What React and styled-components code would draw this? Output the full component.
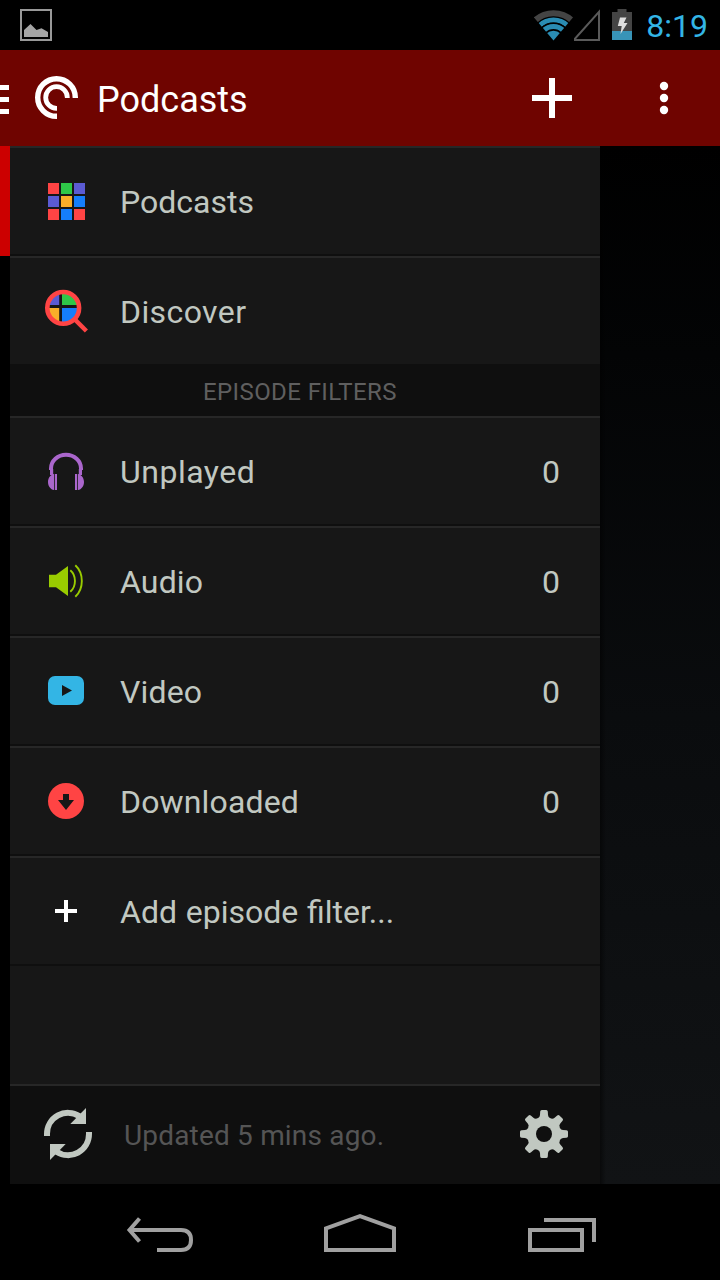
import React from 'react';
import styled, { createGlobalStyle } from 'styled-components';

const GlobalStyle = createGlobalStyle`
  * { box-sizing: border-box; }
  html, body { margin: 0; padding: 0; background: #000; }
  body { font-family: Roboto, "Liberation Sans", sans-serif; overflow: hidden; }
  svg { display: block; flex: none; }
`;

const Screen = styled.div`
  display: flex;
  flex-direction: column;
  width: 720px;
  height: 1280px;
  background: #000;
`;

const StatusBar = styled.div`
  display: flex;
  align-items: center;
  height: 50px;
  padding: 0 12px 0 20px;
`;

const StatusTray = styled.div`
  display: flex;
  align-items: center;
  margin-left: auto;
`;

const Clock = styled.span`
  margin-left: 13px;
  padding-top: 2px;
  font-size: 32px;
  line-height: 38px;
  color: #33b5e5;
`;

const ActionBar = styled.header`
  display: flex;
  align-items: center;
  height: 96px;
  background: #6f0400;
`;

const Title = styled.h1`
  flex: 1;
  margin: 0;
  padding: 4px 0 0 18px;
  font-size: 36px;
  font-weight: 400;
  line-height: 42px;
  color: #fff;
`;

const Main = styled.main`
  display: grid;
  grid-template-columns: 10px 590px 1fr;
  height: 1038px;
`;

const Edge = styled.div`
  background: #000;
`;

const ActiveMark = styled.div`
  height: 110px;
  background: #cc0000;
`;

const Drawer = styled.nav`
  display: flex;
  flex-direction: column;
  background: #171717;
`;

const Backdrop = styled.div`
  background:
    linear-gradient(90deg, rgba(0, 0, 0, 0.5), rgba(0, 0, 0, 0) 6px),
    linear-gradient(180deg, #000 0%, #030405 20%, #0a0c0e 55%, #111315 100%);
`;

const Row = styled.div`
  display: flex;
  align-items: center;
  height: 110px;
  padding: 0 40px 0 32px;
  border-top: 2px solid #272727;
  border-bottom: 2px solid #0f0f0f;
  color: #c1c8c1;
  font-size: 32px;
  line-height: 38px;
`;

const RowLabel = styled.span`
  flex: 1;
  padding: 2px 0 0 30px;
  letter-spacing: ${(p) => (p.$tracking ? `${p.$tracking}px` : 'normal')};
  word-spacing: 0.8px;
`;

const Count = styled.span`
  padding-top: 2px;
`;

const SectionHeader = styled.div`
  display: flex;
  align-items: center;
  justify-content: center;
  height: 50px;
  padding: 2px 10px 0 0;
  background: #0f0f0f;
  color: #5f5f5f;
  font-size: 24px;
  line-height: 28px;
  letter-spacing: 0.4px;
`;

const Footer = styled.div`
  display: flex;
  align-items: center;
  height: 100px;
  margin-top: auto;
  padding: 0 30px 2px 32px;
  border-top: 2px solid #272727;
  background: #0f0f0f;
`;

const UpdatedText = styled.span`
  flex: 1;
  padding: 4px 0 0 30px;
  color: #555;
  font-size: 28px;
  line-height: 34px;
  letter-spacing: 0.18px;
`;

const SystemNav = styled.div`
  display: flex;
  gap: 128px;
  height: 96px;
  padding: 26px 0 0 124px;
`;

const RED = '#ff4444';
const GREEN = '#2ec748';
const VIOLET = '#5b5bd3';
const AMBER = '#f9ae29';
const BLUE = '#157efb';

const TILE_ROWS = [
  [RED, GREEN, VIOLET],
  [VIOLET, AMBER, BLUE],
  [RED, BLUE, RED],
];

const RowIcon = ({ children }) => (
  <svg width="48" height="48" viewBox="0 0 48 48" fill="none">{children}</svg>
);

const GridIcon = () => (
  <RowIcon>
    {TILE_ROWS.map((row, y) =>
      row.map((color, x) => (
        <rect key={`${x}-${y}`} x={6 + x * 13} y={6 + y * 13} width="11" height="11" fill={color} />
      ))
    )}
  </RowIcon>
);

const DiscoverIcon = () => (
  <RowIcon>
    <clipPath id="lens"><circle cx="21.2" cy="20.9" r="15" /></clipPath>
    <g clipPath="url(#lens)">
      <rect x="4" y="4" width="13.2" height="14" fill={VIOLET} />
      <rect x="20" y="4" width="20" height="14" fill={GREEN} />
      <rect x="4" y="21" width="13.2" height="18" fill={AMBER} />
      <rect x="20" y="21" width="20" height="18" fill={BLUE} />
    </g>
    <circle cx="21.2" cy="20.9" r="15.9" stroke={RED} strokeWidth="4.6" />
    <path d="M32 31.6 44.4 44" stroke={RED} strokeWidth="4.4" />
  </RowIcon>
);

const HeadphonesIcon = () => (
  <RowIcon>
    <path d="M9 23V21.5A15 13.7 0 0 1 39 21.5V23" stroke="#aa66cc" strokeWidth="4" />
    <path d="M8 22h3.2v6H8zM36.8 22H40v6h-3.2z" fill="#aa66cc" />
    <path d="M12 27v16C8.5 42.6 6 39 6 35s2.500-7.400 6-8zM36 27v16c3.500-.4 6-4 6-8s-2.500-7.400-6-8z" fill="#aa66cc" />
    <path d="M12.800 27H15v16h-2.200zM33 27h2.200v16H33z" fill="#aa66cc" />
  </RowIcon>
);

const SpeakerIcon = () => (
  <RowIcon>
    <path d="M7 17.800h7L26 9v30l-12-8.800H7z" fill="#99cc00" />
    <path d="M28.300 13.300c6.200 5.200 6.200 16.200 0 21.400M33.300 8.200c8.700 8 8.700 23.600 0 31.600" stroke="#99cc00" strokeWidth="1.900" />
  </RowIcon>
);

const VideoIcon = () => (
  <RowIcon>
    <rect x="6" y="9" width="36" height="29" rx="7" fill="#33b5e5" />
    <path d="M20 18v11l10-5.500z" fill="#171717" />
  </RowIcon>
);

const DownloadIcon = () => (
  <RowIcon>
    <circle cx="24" cy="24" r="18" fill={RED} />
    <path d="M21 17h6v6h5l-8 10-8-10h5z" fill="#171717" />
  </RowIcon>
);

const AddIcon = () => (
  <RowIcon>
    <path d="M22 13h4v9h9v4h-9v9h-4v-9h-9v-4h9z" fill="#fff" />
  </RowIcon>
);

const PictureIcon = () => (
  <svg width="32" height="32" viewBox="0 0 32 32" fill="none">
    <rect x="1" y="1" width="30" height="30" stroke="#999" strokeWidth="2" />
    <path d="M4 28v-7l6.500-6 6 6 5-1.800L28 23v5z" fill="#a5a5a5" />
  </svg>
);

const WifiIcon = () => (
  <svg width="40" height="32" viewBox="0 0 40 32" fill="none">
    <clipPath id="fan"><path d="M19.500 31.500-11.400-5H50.400z" /></clipPath>
    <g clipPath="url(#fan)">
      <circle cx="19.500" cy="31.500" r="27.300" stroke="#444" strokeWidth="6" />
      <circle cx="19.500" cy="31.500" r="20.600" stroke="#2a8cb3" strokeWidth="5" />
      <circle cx="19.500" cy="31.500" r="14.100" stroke="#2a8cb3" strokeWidth="5" />
      <circle cx="19.500" cy="31.500" r="9.800" fill="#2a8cb3" />
      <circle cx="19.500" cy="31.500" r="17.500" stroke="#000" strokeWidth="1.200" />
    </g>
  </svg>
);

const SignalIcon = () => (
  <svg width="38" height="32" viewBox="0 0 38 32" fill="none">
    <path d="M-.200 31H25V2.800z" stroke="#5a5a5a" strokeWidth="2" />
  </svg>
);

const BatteryIcon = () => (
  <svg width="21" height="32" viewBox="0 0 21 32">
    <path d="M5.500 0h9v3H20v28H0V3h5.500z" fill="#444" />
    <path d="M0 22h20v9H0z" fill="#3894b8" />
    <path d="M8 8.500h6.500L11.800 14H15.500L8.500 25l1.200-8H5.800z" fill="#ddd" />
  </svg>
);

const MenuBars = () => (
  <svg width="35" height="48" viewBox="0 0 35 48">
    <path d="M0 11h9v5H0zM0 23h9v5H0zM0 35h9v5H0z" fill="#fff" />
  </svg>
);

const LogoIcon = () => (
  <svg width="44" height="48" viewBox="0 0 44 48" fill="none" stroke="#fff">
    <path d="M22 42.300H21.500A18.800 18.800 0 1 1 40.300 23.500V24" strokeWidth="5.400" />
    <path d="M22 34.300H21.500A10.800 10.800 0 1 1 32.300 23.500V24" strokeWidth="4.800" />
  </svg>
);

const ActionIcons = () => (
  <svg width="188" height="48" viewBox="0 0 188 48" fill="#fff">
    <path d="M17 4h6v17h17v6H23v17h-6V27H0v-6h17z" />
    <circle cx="132" cy="12" r="4.200" />
    <circle cx="132" cy="24" r="4.200" />
    <circle cx="132" cy="36" r="4.200" />
  </svg>
);

const RefreshIcon = () => (
  <svg width="52" height="56" viewBox="0 0 52 56" fill="none">
    {[0, 180].map((turn) => (
      <g key={turn} transform={`rotate(${turn} 26 28)`}>
        <path d="M5 30V28A21 21 0 0 1 37.500 10.300" stroke="#c1c8c1" strokeWidth="6" />
        <path d="M44 2v16H28.300z" fill="#c1c8c1" />
      </g>
    ))}
  </svg>
);

const GearIcon = () => (
  <svg width="52" height="52" viewBox="-26 -26 52 52" fill="#c1c8c1">
    <circle r="14" stroke="#c1c8c1" strokeWidth="6" />
    {[0, 45, 90, 135, 180, 225, 270, 315].map((a) => (
      <path
        key={a}
        transform={`rotate(${a})`}
        d="M-6.500-15.500Q-4-17-4-19L-3.800-22.500Q-3.600-24-2.200-24H2.200Q3.600-24 3.800-22.500L4-19Q4-17 6.500-15.500z"
      />
    ))}
    <circle r="8" fill="#0f0f0f" />
  </svg>
);

const NavIcon = ({ children, width = 72 }) => (
  <svg width={width} height="48" viewBox={`0 0 ${width} 48`} fill="none" stroke="#a0a0a0" strokeWidth="4">
    {children}
  </svg>
);

const PRIMARY = [
  { label: 'Podcasts', Icon: GridIcon },
  { label: 'Discover', Icon: DiscoverIcon, tracking: 0.4 },
];

const FILTERS = [
  { label: 'Unplayed', Icon: HeadphonesIcon, count: 0, tracking: 0.5 },
  { label: 'Audio', Icon: SpeakerIcon, count: 0, tracking: 0.15 },
  { label: 'Video', Icon: VideoIcon, count: 0, tracking: 0.15 },
  { label: 'Downloaded', Icon: DownloadIcon, count: 0, tracking: 0.15 },
  { label: 'Add episode filter...', Icon: AddIcon },
];

const DrawerRow = ({ label, Icon, count, tracking }) => (
  <Row>
    <Icon />
    <RowLabel $tracking={tracking}>{label}</RowLabel>
    {count !== undefined && <Count>{count}</Count>}
  </Row>
);

export default function App() {
  return (
    <Screen>
      <GlobalStyle />
      <StatusBar>
        <PictureIcon />
        <StatusTray>
          <WifiIcon />
          <SignalIcon />
          <BatteryIcon />
          <Clock>8:19</Clock>
        </StatusTray>
      </StatusBar>
      <ActionBar>
        <MenuBars />
        <LogoIcon />
        <Title>Podcasts</Title>
        <ActionIcons />
      </ActionBar>
      <Main>
        <Edge><ActiveMark /></Edge>
        <Drawer>
          {PRIMARY.map((item) => <DrawerRow key={item.label} {...item} />)}
          <SectionHeader>EPISODE FILTERS</SectionHeader>
          {FILTERS.map((item) => <DrawerRow key={item.label} {...item} />)}
          <Footer>
            <RefreshIcon />
            <UpdatedText>Updated 5 mins ago.</UpdatedText>
            <GearIcon />
          </Footer>
        </Drawer>
        <Backdrop />
      </Main>
      <SystemNav>
        <NavIcon>
          <path d="M6 20H57Q67 20 67 30T57 40H33" />
          <path d="M15.500 8.500 5.500 20l10 11.500" />
        </NavIcon>
        <NavIcon>
          <path d="M2 40V18.400L36 6.200 70 18.400V40z" />
        </NavIcon>
        <NavIcon>
          <path d="M20 10H70V32M6 20H58V40H6z" />
        </NavIcon>
      </SystemNav>
    </Screen>
  );
}
